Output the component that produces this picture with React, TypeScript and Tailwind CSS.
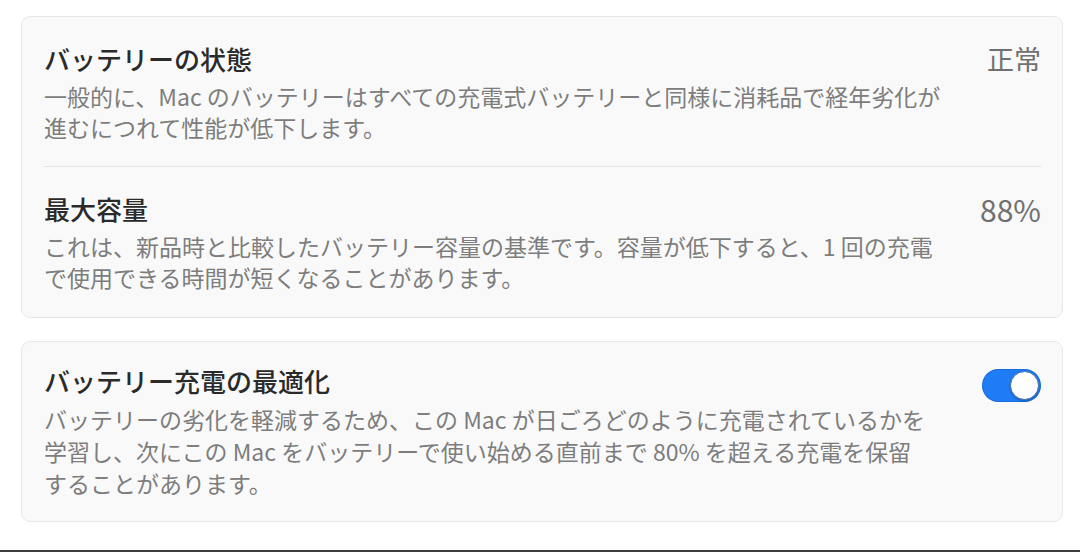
const font = { fontFamily: '"Noto Sans CJK JP", "Noto Sans", sans-serif' }

function Toggle({ on }: { on: boolean }) {
  return (
    <div
      className={
        on
          ? "relative h-[33px] w-[59px] shrink-0 rounded-full bg-[#1f7cf4] shadow-[inset_0_0_0_1px_rgba(0,60,160,0.25)]"
          : "relative h-[33px] w-[59px] shrink-0 rounded-full bg-[#e3e3e3]"
      }
    >
      <div className="absolute right-[2px] top-[2px] h-[29px] w-[29px] rounded-full border border-[#3f6fae] bg-white shadow-[0_1px_2px_rgba(0,0,0,0.25)]" />
    </div>
  )
}

interface RowProps {
  title: string
  lines: string[]
  value?: string
  valueClass?: string
  toggle?: boolean
  className?: string
  lineClass?: string
}

function Row({ title, lines, value, valueClass, toggle, className, lineClass }: RowProps) {
  return (
    <div className={"flex items-start justify-between " + (className ?? "")}>
      <div>
        <div className="text-[26px] font-medium leading-[34px] text-[#2a2a2a]">{title}</div>
        <div className={"mt-[5px] text-[23px] text-[#7d7d7d] " + (lineClass ?? "leading-[31px]")}>
          {lines.map((l) => (
            <div key={l} className="whitespace-nowrap">
              {l}
            </div>
          ))}
        </div>
      </div>
      {value && <div className={"leading-[34px] text-[#707070] " + (valueClass ?? "text-[26px]")}>{value}</div>}
      {toggle !== undefined && (
        <div className="mt-[5px]">
          <Toggle on={toggle} />
        </div>
      )}
    </div>
  )
}

export default function App() {
  return (
    <div className="flex h-[552px] w-[1080px] flex-col overflow-hidden border-b-2 border-[#3d3d3d] bg-white" style={font}>
      <div className="ml-[21px] mr-[17px] mt-4 rounded-[9px] border border-[#e8e8e8] bg-[#f9f9f9] pl-[22px] pr-[21px]">
        <Row
          className="pt-[25px] pb-[23px]"
          title="バッテリーの状態"
          value="正常"
          valueClass="text-[27px]"
          lines={[
            "一般的に、Mac のバッテリーはすべての充電式バッテリーと同様に消耗品で経年劣化が",
            "進むにつれて性能が低下します。",
          ]}
        />
        <div className="h-px bg-[#e4e4e4]" />
        <Row
          className="pt-[25px] pb-[24px]"
          title="最大容量"
          value="88%"
          valueClass="text-[30px]"
          lines={[
            "これは、新品時と比較したバッテリー容量の基準です。容量が低下すると、1 回の充電",
            "で使用できる時間が短くなることがあります。",
          ]}
        />
      </div>
      <div className="ml-[21px] mr-[17px] mt-[23px] rounded-[9px] border border-[#e8e8e8] bg-[#f9f9f9] pl-[22px] pr-[21px]">
        <Row
          className="pt-[22px] pb-[22px]"
          title="バッテリー充電の最適化"
          toggle={true}
          lineClass="leading-[32px]"
          lines={[
            "バッテリーの劣化を軽減するため、この Mac が日ごろどのように充電されているかを",
            "学習し、次にこの Mac をバッテリーで使い始める直前まで 80% を超える充電を保留",
            "することがあります。",
          ]}
        />
      </div>
    </div>
  )
}
